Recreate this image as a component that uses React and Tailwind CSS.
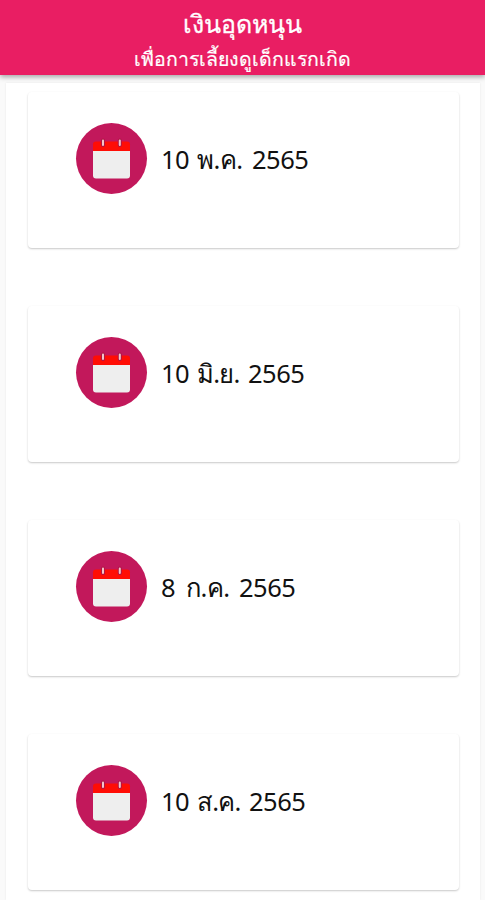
import React from "react";

const payments = [
  { id: 1, day: "10", month: "พ.ค.", year: "2565", dayClass: "w-9", monthClass: "w-[55px]" },
  { id: 2, day: "10", month: "มิ.ย.", year: "2565", dayClass: "w-9", monthClass: "w-[51px] tracking-[-0.8px]" },
  { id: 3, day: "8", month: "ก.ค.", year: "2565", dayClass: "w-[25px]", monthClass: "w-[53px]" },
  { id: 4, day: "10", month: "ส.ค.", year: "2565", dayClass: "w-9", monthClass: "w-[52px] tracking-[-0.8px]" },
];

function CalendarIcon() {
  return (
    <div className="h-[71px] w-[71px] shrink-0 rounded-full bg-[#c2185b]">
      <svg viewBox="0 0 71 71" className="h-full w-full">
        <path d="M17 27h37v25.5a3 3 0 0 1-3 3H20a3 3 0 0 1-3-3z" fill="#eeeeee" />
        <path d="M17 28v-6.5a3 3 0 0 1 3-3h31a3 3 0 0 1 3 3V28z" fill="#ff0d05" />
        <path d="M27 17.5v4.5M43.8 17.5v4.5" stroke="#b01545" strokeWidth="4" strokeLinecap="round" />
        <path d="M27 17.5v4.5M43.8 17.5v4.5" stroke="#f3c6c9" strokeWidth="2" strokeLinecap="round" />
      </svg>
    </div>
  );
}

function App() {
  return (
    <div className="flex h-[900px] w-[485px] flex-col overflow-hidden bg-[#fafafa] font-['Noto_Sans',sans-serif]">
      <header className="relative flex h-[75px] shrink-0 flex-col items-center bg-[#e91e63] pt-1 text-white shadow-[0_2px_5px_rgba(0,0,0,0.35)]">
        <h1 className="text-[25px] leading-[38px] [-webkit-text-stroke:0.3px_white]">เงินอุดหนุน</h1>
        <p className="pt-px text-[19.5px] leading-[31px] [-webkit-text-stroke:0.2px_white]">
          เพื่อการเลี้ยงดูเด็กแรกเกิด
        </p>
      </header>
      <main className="mt-2 mr-[5px] ml-1.5 flex flex-1 flex-col gap-[58px] bg-white pt-[9px] pr-[21px] pl-[22px] shadow-[0_0_2px_rgba(0,0,0,0.08)]">
        {payments.map((item) => (
          <section
            key={item.id}
            className="flex h-[156px] shrink-0 gap-[14px] rounded bg-white pt-[31px] pl-12 shadow-[0_1px_2px_rgba(0,0,0,0.22)]"
          >
            <CalendarIcon />
            <p className="flex pt-[17px] text-[25.5px] leading-[39px] tracking-[-0.5px] whitespace-nowrap text-[#111111]">
              <span className={item.dayClass}>{item.day}</span>
              <span className={item.monthClass}>{item.month}</span>
              <span>{item.year}</span>
            </p>
          </section>
        ))}
      </main>
    </div>
  );
}

export default App;
